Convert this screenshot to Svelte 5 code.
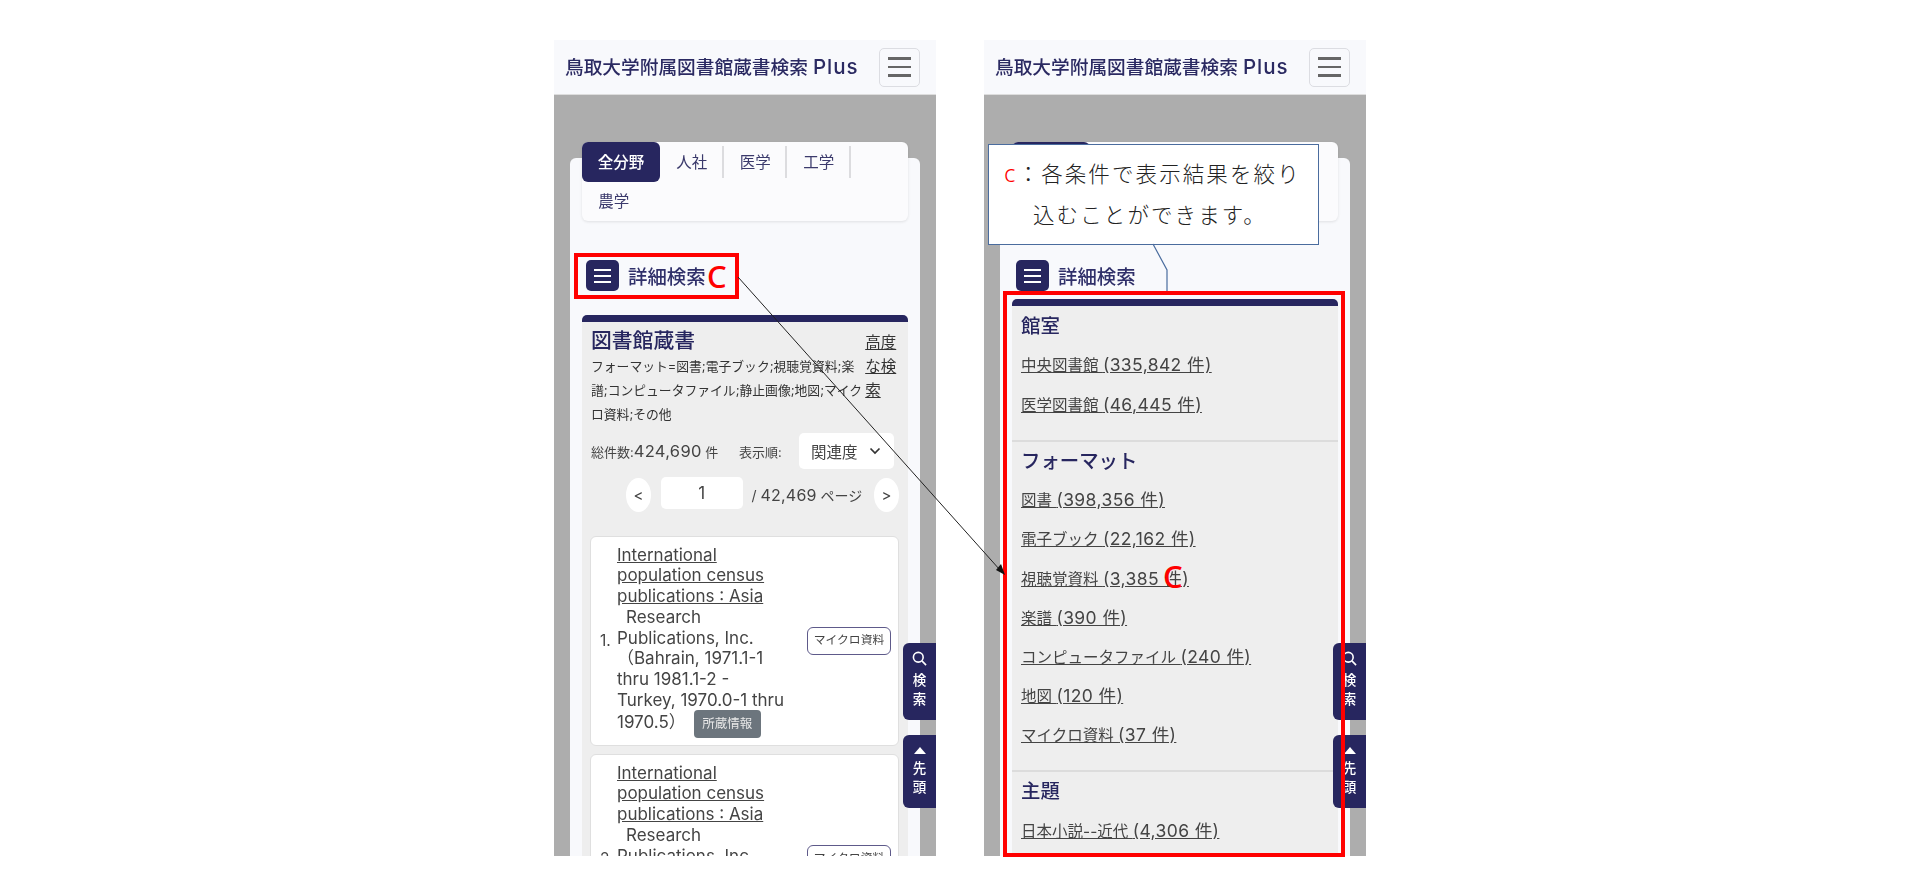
<script>
  const tabs = ['全分野', '人社', '医学', '工学', '農学'];
  const lines = ['International', 'population census', 'publications : Asia'];
  const facets = [
    {
      title: '館室',
      items: [
        ['中央図書館', '335,842'],
        ['医学図書館', '46,445']
      ]
    },
    {
      title: 'フォーマット',
      items: [
        ['図書', '398,356'],
        ['電子ブック', '22,162'],
        ['視聴覚資料', '3,385'],
        ['楽譜', '390'],
        ['コンピュータファイル', '240'],
        ['地図', '120'],
        ['マイクロ資料', '37']
      ]
    },
    { title: '主題', items: [['日本小説--近代', '4,306']] }
  ];
</script>

{#snippet header()}
  <header class="topbar">
    <span class="brand">鳥取大学附属図書館蔵書検索 <span class="plus">Plus</span></span>
    <span class="toggler"><i></i><i></i><i></i></span>
  </header>
{/snippet}

{#snippet tabbar()}
  <div class="tabs">
    {#each tabs as tab, i}
      <span class="tab" class:active={i === 0} class:sep={i > 0 && i < 4}>{tab}</span>
    {/each}
  </div>
{/snippet}

{#snippet detail()}
  <div class="detail">
    <span class="detail-btn"><i></i><i></i><i></i></span>
    <span class="detail-label">詳細検索</span>
  </div>
{/snippet}

{#snippet sidebtns()}
  <div class="side side-search">
    <svg width="15" height="15" viewBox="0 0 16 16" fill="none" stroke="#fff" stroke-width="1.7">
      <circle cx="6.7" cy="6.7" r="5.2" />
      <path d="M10.6 10.6 15 15" />
    </svg>
    <span>検</span><span>索</span>
  </div>
  <div class="side side-top">
    <svg width="14" height="9" viewBox="0 0 14 9"><path d="M7 1 13 8H1Z" fill="#fff" /></svg>
    <span>先</span><span>頭</span>
  </div>
{/snippet}

{#snippet record(n)}
  <div class="record">
    <span class="num">{n}.</span>
    <div class="rec-body">
      {#each lines as line}
        <a href="#top" class="rec-title">{line}</a>
      {/each}
      <div class="indent">Research</div>
      <div>Publications, Inc.</div>
      <div>（Bahrain, 1971.1-1</div>
      <div>thru 1981.1-2 -</div>
      <div>Turkey, 1970.0-1 thru</div>
      <div class="last">1970.5）<span class="holding">所蔵情報</span></div>
    </div>
    <span class="kind">マイクロ資料</span>
  </div>
{/snippet}

<div class="page">
  <section class="phone">
    {@render header()}
    <div class="panel">
      {@render tabbar()}
      {@render detail()}
      <div class="card">
        <div class="card-head">
          <div class="card-text">
            <h2>図書館蔵書</h2>
            <p>フォーマット=図書;電子ブック;視聴覚資料;楽譜;コンピュータファイル;静止画像;地図;マイクロ資料;その他</p>
          </div>
          <a href="#top" class="advanced">高度な検索</a>
        </div>
        <div class="stats">
          <span class="count">総件数:<b>424,690</b> 件</span>
          <span class="order">表示順:</span>
          <span class="select">関連度
            <svg width="12" height="8" viewBox="0 0 12 8" fill="none" stroke="#333" stroke-width="1.7"><path d="M1.5 1.5 6 6l4.5-4.5" /></svg>
          </span>
        </div>
        <div class="pager">
          <span class="pill">&lt;</span>
          <span class="pageno">1</span>
          <span class="total">/ <b>42,469</b> ページ</span>
          <span class="pill">&gt;</span>
        </div>
        {@render record(1)}
        {@render record(2)}
      </div>
    </div>
    {@render sidebtns()}
  </section>

  <section class="phone second">
    {@render header()}
    <div class="panel">
      {@render tabbar()}
      {@render detail()}
      <div class="card facets">
        {#each facets as facet}
          <div class="facet">
            <h3>{facet.title}</h3>
            {#each facet.items as [name, count]}
              <a href="#top" class="facet-link">{name} <span class="cnt">({count} 件)</span></a>
            {/each}
          </div>
        {/each}
      </div>
    </div>
    {@render sidebtns()}
  </section>

  <!-- annotations drawn on top of the two screens -->
  <div class="mark mark-detail"></div>
  <span class="letter letter-a">C</span>
  <div class="mark mark-facets"></div>
  <span class="letter letter-b">C</span>
  <div class="callout">
    <div><span class="red">c</span><span>：</span>各条件で表示結果を絞り</div>
    <div class="second-line">込むことができます。</div>
  </div>
  <svg class="lines" width="1920" height="890" viewBox="0 0 1920 890" fill="none">
    <path d="M738 277 1000 570" stroke="#222" stroke-width="1" />
    <path d="M1005 575 996 570 1001 564Z" fill="#111" />
    <path d="M1153 244 1167 270V291" stroke="#4a6c9e" stroke-width="1.2" />
  </svg>
</div>

<style>
  :global(body) {
    margin: 0;
    background: #fff;
  }

  .page {
    position: relative;
    display: flex;
    gap: 48px;
    width: 1920px;
    height: 890px;
    box-sizing: border-box;
    padding: 40px 0 0 554px;
    font-family: Inter, "Noto Sans CJK JP", sans-serif;
    overflow: hidden;
  }

  .phone {
    position: relative;
    width: 382px;
    height: 816px;
    background: #adadad;
    overflow: hidden;
    filter: blur(0.35px);
  }

  .topbar {
    display: flex;
    align-items: center;
    justify-content: space-between;
    height: 55px;
    box-sizing: border-box;
    padding: 0 16px 3px 11px;
    background: #f8f9fc;
    border-bottom: 1px solid #ddd;
  }

  .brand {
    font-size: 18.7px;
    font-weight: 500;
    color: #2b2a62;
    white-space: nowrap;
  }

  .plus {
    font-size: 20.5px;
    letter-spacing: 1px;
  }

  .toggler {
    display: flex;
    flex-direction: column;
    justify-content: center;
    gap: 6px;
    width: 41px;
    height: 39px;
    margin-top: 3px;
    box-sizing: border-box;
    padding: 0 8px;
    border: 1px solid #dcdde2;
    border-radius: 5px;
  }

  .toggler i {
    display: block;
    height: 2.4px;
    background: #666;
  }

  .panel {
    margin: 63px 16px 0;
    height: 700px;
    background: #f8f9fc;
    border-radius: 6px 6px 0 0;
  }

  .tabs {
    position: relative;
    top: -16px;
    display: flex;
    flex-wrap: wrap;
    align-content: flex-start;
    width: 326px;
    height: 78.5px;
    margin-left: 12px;
    background: #fbfbfd;
    border-radius: 6px;
    box-shadow: 0 1px 3px rgba(0, 0, 0, 0.1);
  }

  .tab {
    position: relative;
    display: flex;
    align-items: center;
    justify-content: center;
    width: 63.5px;
    height: 39.5px;
    box-sizing: border-box;
    padding-bottom: 2px;
    font-size: 15.5px;
    color: #3b3a6c;
  }

  .tab.sep::after {
    content: "";
    position: absolute;
    right: 0;
    top: 4px;
    bottom: 4px;
    width: 2px;
    background: #dcdcdf;
  }

  .tab.active {
    width: 78px;
    color: #fff;
    font-weight: 500;
    background: #27265f;
    border-radius: 6px;
  }

  .detail {
    display: flex;
    align-items: center;
    gap: 9px;
    margin: 23.5px 0 0 16px;
    height: 31px;
  }

  .detail-btn {
    display: flex;
    flex-direction: column;
    justify-content: center;
    gap: 4px;
    width: 33px;
    height: 31px;
    box-sizing: border-box;
    padding: 0 8px;
    background: #27265f;
    border-radius: 5px;
  }

  .detail-btn i {
    display: block;
    height: 2px;
    background: #fff;
  }

  .detail-label {
    font-size: 19.4px;
    font-weight: 500;
    color: #30306a;
  }

  .card {
    width: 326px;
    margin: 24px 0 0 12px;
    padding: 0 9px;
    box-sizing: border-box;
    background: #eeeeee;
    border-top: 7px solid #27265f;
    border-radius: 5px 5px 0 0;
    height: 560px;
  }

  .card-head {
    display: flex;
    justify-content: space-between;
  }

  .card-text {
    width: 276px;
  }

  h2 {
    margin: 4px 0 0;
    font-size: 20.8px;
    line-height: 29px;
    font-weight: 500;
    color: #27265f;
  }

  .card-text p {
    margin: 0;
    font-size: 12.8px;
    line-height: 24px;
    color: #333;
  }

  .advanced {
    width: 32px;
    margin: 9px 2px 0 0;
    font-size: 15.5px;
    line-height: 24px;
    color: #333;
  }

  .stats {
    display: flex;
    align-items: center;
    height: 36px;
    margin-top: 6px;
    font-size: 13px;
    color: #444;
  }

  .count {
    flex: none;
    width: 132px;
    white-space: nowrap;
  }

  .stats b {
    font-weight: 400;
    font-size: 16.5px;
    letter-spacing: 0.3px;
  }

  .order {
    flex: none;
    width: 46px;
    margin-left: 16px;
    white-space: nowrap;
  }

  .select {
    display: flex;
    align-items: center;
    justify-content: space-between;
    flex: none;
    width: 95px;
    height: 36px;
    box-sizing: border-box;
    margin-left: 14px;
    padding: 0 13px 0 12px;
    font-size: 15.5px;
    color: #444;
    background: #fff;
    border-radius: 5px;
  }

  .pager {
    display: flex;
    align-items: center;
    height: 36px;
    margin: 8px 0 0 35px;
    color: #444;
  }

  .pill {
    display: flex;
    align-items: center;
    justify-content: center;
    width: 25px;
    height: 34px;
    font-size: 15px;
    background: #fff;
    border-radius: 50%;
  }

  .pageno {
    display: flex;
    align-items: center;
    justify-content: center;
    width: 82px;
    height: 32px;
    margin: -4px 9px 0 10px;
    font-size: 17px;
    background: #fff;
    border-radius: 5px;
  }

  .total {
    width: 123px;
    font-size: 14px;
    white-space: nowrap;
  }

  .total b {
    font-weight: 400;
    font-size: 16px;
    letter-spacing: 0.2px;
  }

  .record {
    display: flex;
    align-items: center;
    box-sizing: border-box;
    width: 309px;
    height: 210px;
    margin: 23px 0 8px -1px;
    padding: 0 7px 0 9px;
    font-size: 17px;
    line-height: 20.7px;
    color: #444;
    background: #fff;
    border: 1px solid #dfdfdf;
    border-radius: 6px;
  }

  .record + .record {
    margin-top: 0;
  }

  .num {
    flex: none;
    width: 13px;
    margin-right: 4px;
    font-size: 15.5px;
  }

  .rec-body {
    width: 185px;
    flex: none;
    margin-top: -3px;
    white-space: nowrap;
  }

  .rec-title {
    display: block;
    color: #444;
  }

  .indent {
    padding-left: 9px;
  }

  .last {
    height: 24px;
    line-height: 24px;
  }

  .holding {
    display: inline-block;
    width: 67px;
    height: 28px;
    margin-left: 8px;
    font-size: 12.5px;
    line-height: 28px;
    text-align: center;
    color: #e8e8e8;
    background: #6c757d;
    border-radius: 4px;
    vertical-align: top;
  }

  .kind {
    flex: none;
    width: 84px;
    height: 28px;
    margin-left: auto;
    box-sizing: border-box;
    font-size: 11.8px;
    line-height: 25px;
    text-align: center;
    color: #444;
    border: 1px solid #5e5a8a;
    border-radius: 6px;
  }

  .side {
    position: absolute;
    right: 0;
    display: flex;
    flex-direction: column;
    align-items: center;
    width: 33px;
    box-sizing: border-box;
    color: #fff;
    font-size: 13.5px;
    font-weight: 500;
    line-height: 18.5px;
    background: #27265f;
    border-radius: 6px 0 0 6px;
  }

  .side-search {
    top: 603px;
    height: 77px;
    padding-top: 8px;
  }

  .side-search svg {
    margin-bottom: 5px;
  }

  .side-top {
    top: 695px;
    height: 73px;
    padding-top: 11px;
  }

  .side-top svg {
    margin-bottom: 4px;
  }

  .facets {
    margin-top: 8px;
    height: 620px;
  }

  .facet {
    padding-bottom: 16px;
    border-bottom: 2px solid #dcdcdc;
    margin: 0 -9px;
    padding-left: 9px;
  }

  .facet:first-child h3 {
    padding-top: 5px;
  }

  .facet:last-child {
    border-bottom: 0;
  }

  h3 {
    margin: 0 0 4.4px;
    padding-top: 4px;
    font-size: 19.4px;
    line-height: 30px;
    font-weight: 500;
    color: #27265f;
  }

  .facet-link {
    display: block;
    height: 39.2px;
    font-size: 15.5px;
    line-height: 39.2px;
    color: #444;
  }

  .cnt {
    font-size: 17.5px;
    letter-spacing: 0.4px;
  }

  .mark {
    position: absolute;
    box-sizing: border-box;
    border: 4px solid #f00;
  }

  .mark-detail {
    left: 574px;
    top: 253px;
    width: 165px;
    height: 46px;
  }

  .mark-facets {
    left: 1003px;
    top: 291px;
    width: 342px;
    height: 566px;
  }

  .letter {
    position: absolute;
    font-family: "Noto Sans", sans-serif;
    font-size: 31px;
    font-weight: 500;
    line-height: 32px;
    color: #f00;
  }

  .letter-a {
    left: 707px;
    top: 260px;
  }

  .letter-b {
    left: 1163px;
    top: 560px;
  }

  .callout {
    position: absolute;
    left: 988px;
    top: 144px;
    width: 331px;
    height: 101px;
    box-sizing: border-box;
    padding: 7px 0 0 15px;
    font-family: "Noto Sans CJK JP", sans-serif;
    font-size: 21.5px;
    font-weight: 300;
    letter-spacing: 2.1px;
    line-height: 41px;
    color: #222;
    background: #fff;
    border: 1px solid #4a6c9e;
    white-space: nowrap;
  }

  .red {
    color: #f00;
    font-family: "Noto Sans", sans-serif;
    font-size: 24px;
  }

  .second-line {
    padding-left: 29px;
  }

  .lines {
    position: absolute;
    left: 0;
    top: 0;
    pointer-events: none;
  }
</style>
